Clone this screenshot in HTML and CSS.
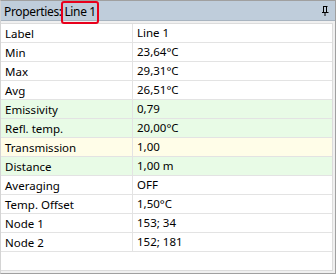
FILE: index.html
```html
<!DOCTYPE html>
<html>
<head>
<meta charset="utf-8">
<link rel="stylesheet" href="styles.css">
</head>
<body>
<div class="panel">
  <div class="titlebar">
    <span class="title">Properties: <span class="mark">Line 1</span></span>
    <svg class="pin" width="8" height="10" viewBox="0 0 8 10">
      <path d="M2 0.5H6.5M2.5 0.5V6M5.5 0.5V6M1 6.5H7.5M4 6.5V10" stroke="#000" stroke-width="1" fill="none"/>
      <rect x="5" y="1" width="1" height="5" fill="#000"/>
    </svg>
  </div>
  <div class="content">
    <div class="grid">
      <div class="row"><div class="k">Label</div><div class="v">Line 1</div></div>
      <div class="row"><div class="k">Min</div><div class="v">23,64°C</div></div>
      <div class="row"><div class="k">Max</div><div class="v">29,31°C</div></div>
      <div class="row"><div class="k">Avg</div><div class="v">26,51°C</div></div>
      <div class="row green"><div class="k">Emissivity</div><div class="v">0,79</div></div>
      <div class="row green"><div class="k">Refl. temp.</div><div class="v">20,00°C</div></div>
      <div class="row yellow"><div class="k">Transmission</div><div class="v">1,00</div></div>
      <div class="row green"><div class="k">Distance</div><div class="v">1,00 m</div></div>
      <div class="row"><div class="k">Averaging</div><div class="v">OFF</div></div>
      <div class="row"><div class="k">Temp. Offset</div><div class="v">1,50°C</div></div>
      <div class="row"><div class="k">Node 1</div><div class="v">153; 34</div></div>
      <div class="row"><div class="k">Node 2</div><div class="v">152; 181</div></div>
    </div>
  </div>
</div>
</body>
</html>
```

FILE: styles.css
```css
html, body {
  margin: 0;
  padding: 0;
  background: #ffffff;
}
.panel {
  width: 336px;
  height: 274px;
  box-sizing: border-box;
  border-top: 1px solid #a0a0a0;
  border-right: 1px solid #a0a0a0;
  border-bottom: 1px solid #a0a0a0;
  border-left: 1px solid #d4d4d4;
  background: #f0f0f0;
  display: flex;
  flex-direction: column;
  font-family: "Noto Sans", "Open Sans", sans-serif;
  font-size: 11.5px;
  color: #000;
}
.titlebar {
  height: 19px;
  background: #bfcddb;
  border-bottom: 1px solid #a8b4c0;
  display: flex;
  align-items: center;
  justify-content: space-between;
  padding: 0 6px 0 3px;
  position: relative;
}
.title {
  line-height: 19px;
  padding-top: 2px;
  font-size: 12px;
  letter-spacing: -0.35px;
}
.mark {
  position: relative;
}
.mark::after {
  content: "";
  position: absolute;
  left: -3px;
  right: -3px;
  top: -2px;
  bottom: -4px;
  border: 2px solid #e8001c;
  border-radius: 3px;
}
.pin {
  display: block;
}
.content {
  flex: 1;
  padding: 2px 2px 2px 0;
  display: flex;
}
.grid {
  flex: 1;
  background: #fff;
  border: 1px solid #dcdcdc;
  border-left: none;
}
.row {
  display: grid;
  grid-template-columns: 132px 1fr;
  height: 19px;
  box-sizing: border-box;
  border-bottom: 1px solid #e3e3e3;
}
.row .k {
  padding-left: 4px;
  border-right: 1px solid #e3e3e3;
  line-height: 19px;
  white-space: nowrap;
}
.row .v {
  padding-left: 4px;
  line-height: 18px;
  white-space: nowrap;
}
.green {
  background: #e8fbe6;
}
.yellow {
  background: #fffde8;
}
```
